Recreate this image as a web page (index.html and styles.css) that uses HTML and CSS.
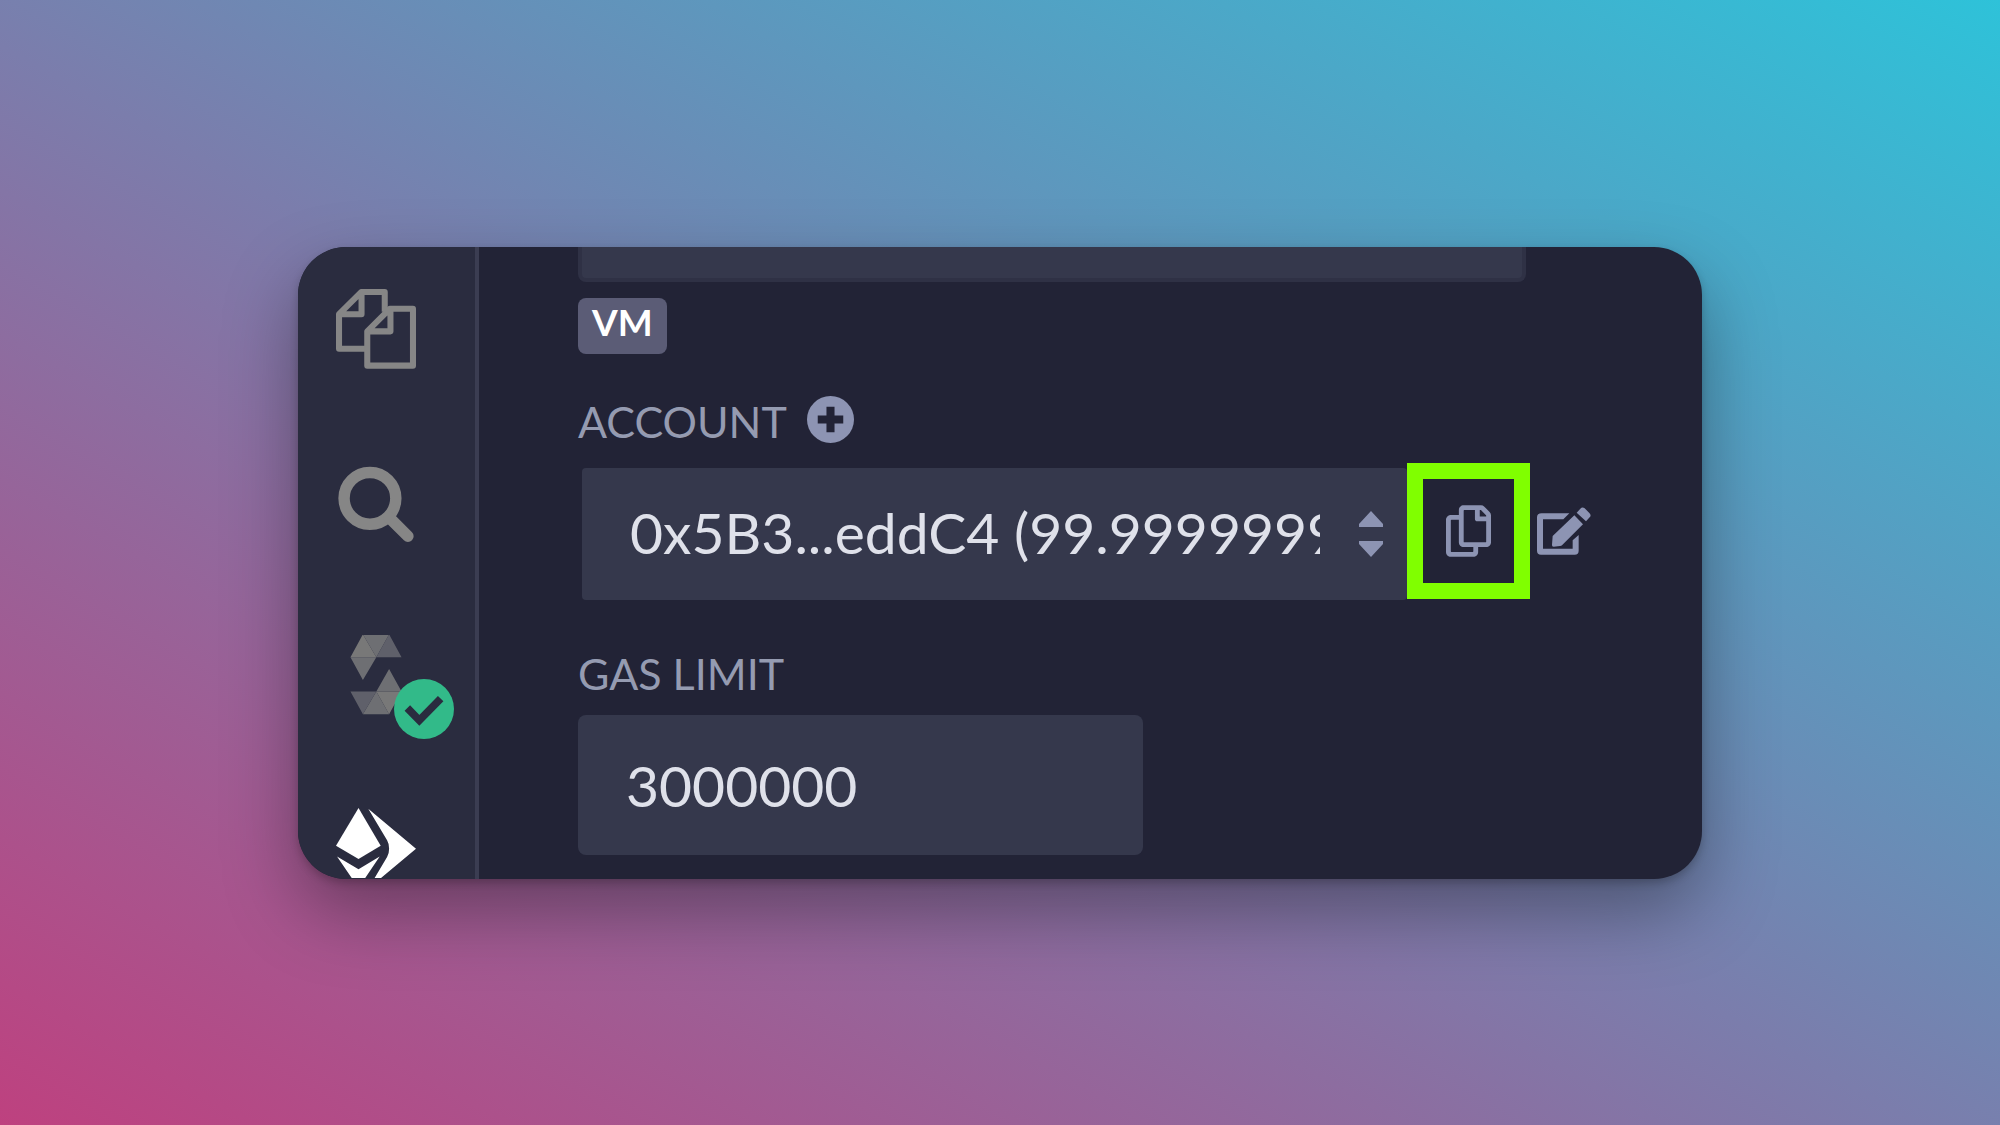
FILE: index.html
```
<!DOCTYPE html>
<html lang="en">
<head>
    <meta charset="UTF-8">
    <meta name="viewport" content="width=device-width, initial-scale=1.0">
    <title>Deploy &amp; Run Transactions</title>
    <link rel="stylesheet" href="styles.css">
</head>
<body>

    <div class="window">

        <!-- Plugin icons -->
        <nav class="sidebar">
            <button type="button" class="nav-button" aria-label="File explorer">
                <svg class="nav-icon" viewBox="0 0 238 238" fill="none" stroke="#868686" stroke-width="18" stroke-linejoin="round">
                    <path d="M90 178H9V75L75 9H145V68M76 9V75H9"/>
                    <path d="M93 228V126L160 59H229V228ZM162 59V126H93"/>
                </svg>
            </button>
            <button type="button" class="nav-button" aria-label="Search">
                <svg class="nav-icon" viewBox="-7 -14 238 238" fill="none" stroke="#868686">
                    <circle cx="94" cy="94" r="77" stroke-width="34"/>
                    <path d="M150 150L207 207" stroke-width="34" stroke-linecap="round"/>
                </svg>
            </button>
            <button type="button" class="nav-button" aria-label="Solidity compiler">
                <svg class="nav-icon" viewBox="-43 2 238 238">
                    <path fill="#787878" d="M0 68L37 0L77 68ZM152 170L115 238L77 170Z"/>
                    <path fill="#6e6f73" d="M0 68H77L37 136ZM37 0H115L77 68ZM152 170H77L115 103ZM115 238H37L77 170Z"/>
                    <path fill="#5f606a" d="M115 0L152 68H77ZM37 238L0 170H77Z"/>
                </svg>
                <svg class="status" viewBox="0 0 180 180">
                    <circle cx="90" cy="90" r="90" fill="#32ba89"/>
                    <path d="M40 87L76 124L140 59" fill="none" stroke="#2a2c3f" stroke-width="23"/>
                </svg>
            </button>
            <button type="button" class="nav-button nav-button-last" aria-label="Deploy and run">
                <svg class="nav-icon" viewBox="0 0 238 238" fill="#fff">
                    <path d="M67 0L133 112L67 152L0 112Z"/>
                    <path d="M3 144L67 182L130 144L67 238Z"/>
                    <path d="M96 2L238 121L96 240L152 146Q158 136 158 121T152 96Z"/>
                </svg>
            </button>
        </nav>

        <!-- Run settings -->
        <main class="panel">
            <div class="environment"></div>
            <span class="badge">VM</span>

            <div class="label-row">
                <label for="account">ACCOUNT</label>
                <button type="button" class="icon-button" aria-label="Create account">
                    <svg class="plus-icon" viewBox="0 0 140 140">
                        <circle cx="70" cy="70" r="70" fill="#8d94b3"/>
                        <path d="M32 70H108M70 32V108" stroke="#222336" stroke-width="24"/>
                    </svg>
                </button>
            </div>

            <div class="account-row">
                <select id="account" class="account">
                    <option>0x5B3...eddC4 (99.99999999999999 ether)</option>
                </select>
                <button type="button" class="icon-button copy" aria-label="Copy account">
                    <svg class="copy-icon" viewBox="0 0 448 512" fill="#8d94b3">
                        <path d="M433.941 65.941l-51.882-51.882A48 48 0 0 0 348.118 0H176c-26.51 0-48 21.49-48 48v48H48c-26.51 0-48 21.49-48 48v320c0 26.51 21.49 48 48 48h224c26.51 0 48-21.49 48-48v-48h80c26.51 0 48-21.49 48-48V99.882a48 48 0 0 0-14.059-33.941zM266 464H54a6 6 0 0 1-6-6V150a6 6 0 0 1 6-6h74v224c0 26.51 21.49 48 48 48h96v42a6 6 0 0 1-6 6zm128-96H182a6 6 0 0 1-6-6V54a6 6 0 0 1 6-6h106v88c0 13.255 10.745 24 24 24h88v202a6 6 0 0 1-6 6zm6-256h-64V48h9.632c1.591 0 3.117.632 4.243 1.757l48.368 48.368a6 6 0 0 1 1.757 4.243V112z"/>
                    </svg>
                </button>
                <button type="button" class="icon-button" aria-label="Sign a message">
                    <svg class="edit-icon" viewBox="0 0 162 144" fill="#8d94b3">
                        <path d="M14 19H97L79 37H18V125H107V100L125 84V131Q125 143 113 143H12Q0 143 0 131V31Q0 19 14 19Z"/>
                        <path d="M47 87L112 25L138 52L75 115Q73 117 69 117L50 119Q44 119 45 113Z"/>
                        <path d="M119 17L130 5Q136 -2 143 4L157 18Q164 25 158 31L147 43Z"/>
                    </svg>
                </button>
            </div>

            <label for="gas" class="gas-label">GAS LIMIT</label>
            <input type="text" id="gas" class="gas" value="3000000">
        </main>

    </div>

</body>
</html>
```
FILE: styles.css
```
* {
    box-sizing: border-box;
}

body {
    font-family: Lato, 'Open Sans', sans-serif;
    background: linear-gradient(to top right, #be417f, #7b7dac 48%, #2ec2d9);
    margin: 0;
    min-height: 100vh;
    display: flex;
    align-items: center;
    justify-content: center;
}

.window {
    display: flex;
    width: 70.2%;
    min-width: 1300px;
    border-radius: 48px;
    overflow: hidden;
    background-color: #222336;
    box-shadow: 0 4px 8px rgba(0, 0, 0, 0.2), 0 32px 72px rgba(0, 0, 0, 0.35);
}

button {
    padding: 0;
    border: none;
    background: none;
    cursor: pointer;
}

svg {
    display: block;
}

/* Sidebar */
.sidebar {
    flex: none;
    display: flex;
    flex-direction: column;
    gap: 93px;
    width: 181px;
    padding: 42px 0 0 38px;
    background-color: #2a2c3f;
    border-right: 4px solid #3b3d52;
}

.nav-button {
    position: relative;
    width: 80px;
    height: 80px;
}

.nav-button-last {
    height: 70px;
    overflow: hidden;
}

.nav-icon {
    width: 80px;
    height: 80px;
}

.status {
    position: absolute;
    right: -38px;
    bottom: -24px;
    width: 60px;
    height: 60px;
}

/* Panel */
.panel {
    flex: 1;
    display: flex;
    flex-direction: column;
    align-items: flex-start;
    padding: 0 110px 24px 99px;
}

.environment {
    width: 948px;
    height: 35px;
    background-color: #35384c;
    border: 4px solid #2f3145;
    border-top: none;
    border-radius: 0 0 8px 8px;
}

.badge {
    height: 56px;
    margin-top: 16px;
    padding: 0 14px;
    border-radius: 8px;
    background-color: #5b5c76;
    color: #fff;
    font-size: 37px;
    font-weight: 700;
    line-height: 48px;
}

.label-row {
    display: flex;
    align-items: flex-start;
    gap: 20px;
    margin-top: 42px;
}

label {
    color: #959bb1;
    font-size: 43px;
    line-height: 52px;
}

.plus-icon {
    width: 47px;
    height: 47px;
}

.account-row {
    display: flex;
    align-items: center;
    margin-top: 14px;
    padding-left: 4px;
}

.account,
.gas {
    border: none;
    border-radius: 4px;
    background-color: #35384c;
    color: #dfe1ea;
    font-family: inherit;
    font-size: 57px;
}

.account {
    width: 825px;
    height: 132px;
    margin-top: 6px;
    padding: 0 87px 4px 48px;
    appearance: none;
    background-image: url("data:image/svg+xml,%3Csvg xmlns='http://www.w3.org/2000/svg' viewBox='0 0 24 46'%3E%3Cpath fill='%238d94b3' d='M12 0L24 13V16H0V13ZM12 46L0 33V30H24V33Z'/%3E%3C/svg%3E");
    background-repeat: no-repeat;
    background-position: right 24px center;
    background-size: 24px 46px;
}

.copy {
    display: flex;
    align-items: center;
    justify-content: center;
    width: 123px;
    height: 136px;
    margin-right: 7px;
    border: 16px solid #80ff00;
}

.copy-icon {
    width: 45px;
    height: 52px;
}

.edit-icon {
    width: 54px;
    height: 48px;
}

.gas-label {
    margin-top: 48px;
}

.gas {
    width: 565px;
    height: 140px;
    margin-top: 15px;
    padding: 0 48px;
    border-radius: 8px;
}
```
